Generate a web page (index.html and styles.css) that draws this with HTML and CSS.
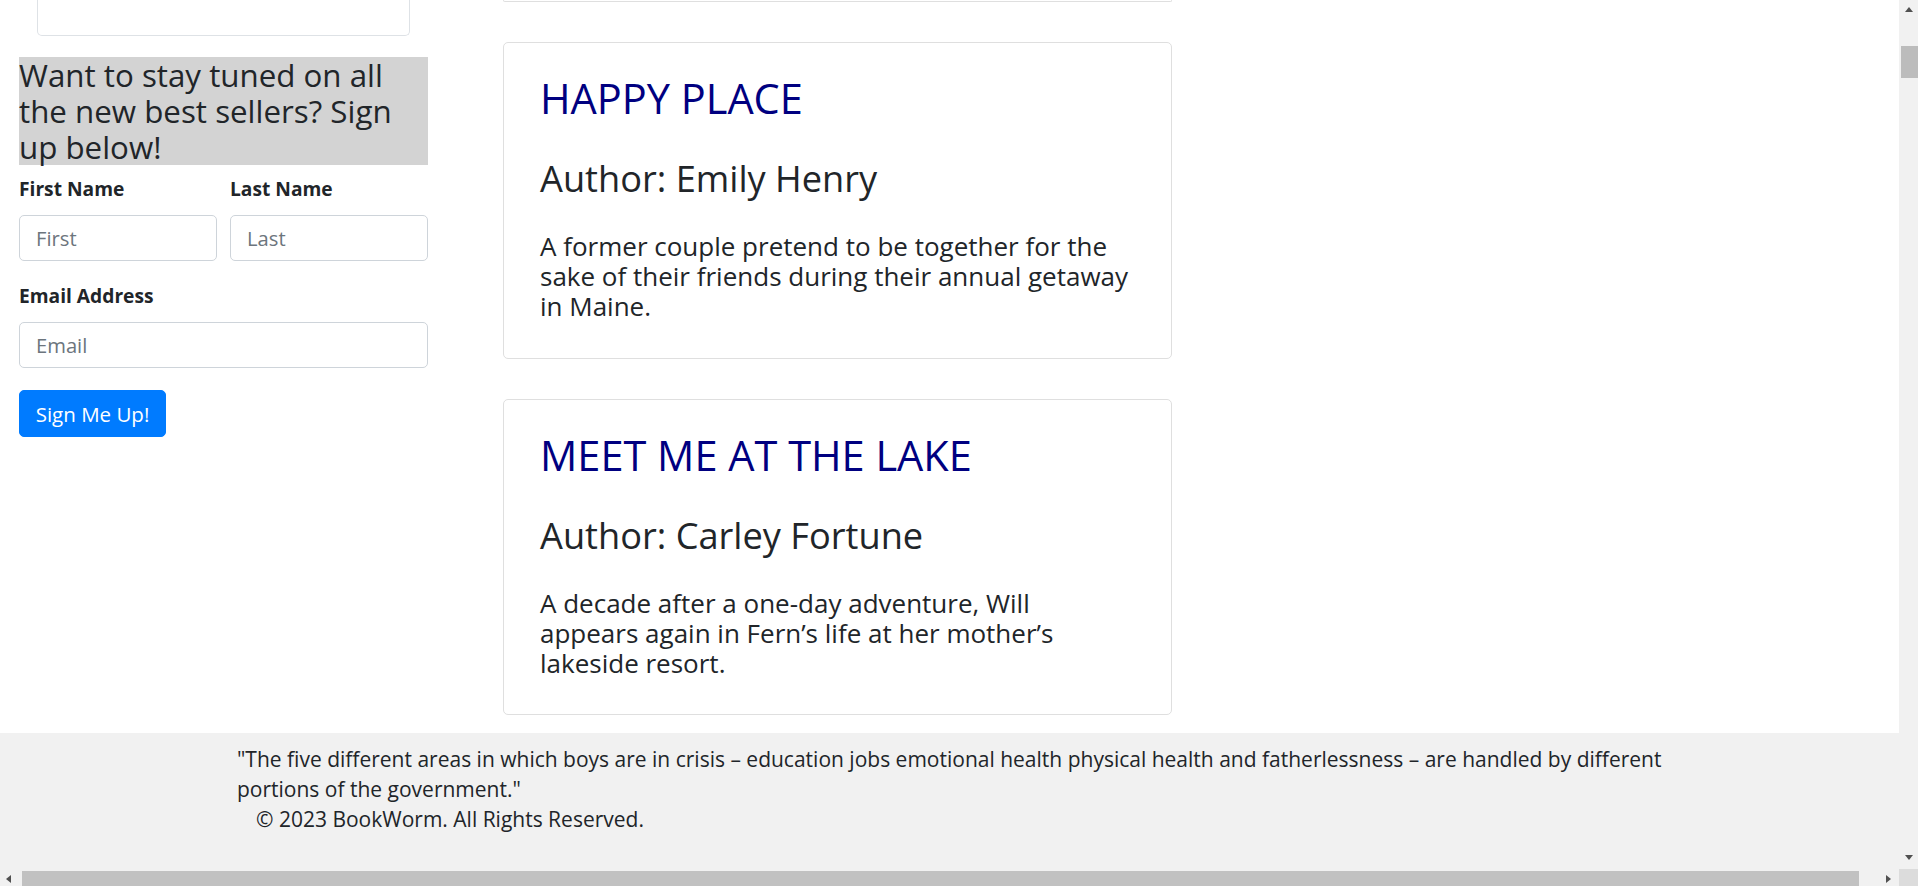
FILE: index.html
```html
<!DOCTYPE html>
<html lang="en">
<head>
<meta charset="utf-8">
<title>BookWorm</title>
<link rel="stylesheet" href="styles.css">
</head>
<body>
<div class="screen">
  <div class="page">
    <div class="main">
      <aside class="side">
        <div class="side-cut"></div>
        <h3 class="promo">Want to stay tuned on all the new best sellers? Sign up below!</h3>
        <form class="signup">
          <div class="name-row">
            <div class="field">
              <label for="first">First Name</label>
              <input id="first" type="text" placeholder="First">
            </div>
            <div class="field">
              <label for="last">Last Name</label>
              <input id="last" type="text" placeholder="Last">
            </div>
          </div>
          <div class="field email-field">
            <label for="email">Email Address</label>
            <input id="email" type="email" placeholder="Email">
          </div>
          <button type="button" class="btn">Sign Me Up!</button>
        </form>
      </aside>
      <section class="books">
        <div class="book-cut"></div>
        <article class="book">
          <h2 class="book-title">HAPPY PLACE</h2>
          <h3 class="book-author">Author: Emily Henry</h3>
          <p class="book-desc">A former couple pretend to be together for the sake of their friends during their annual getaway in Maine.</p>
        </article>
        <article class="book">
          <h2 class="book-title">MEET ME AT THE LAKE</h2>
          <h3 class="book-author">Author: Carley Fortune</h3>
          <p class="book-desc">A decade after a one-day adventure, Will appears again in Fern’s life at her mother’s lakeside resort.</p>
        </article>
      </section>
    </div>
    <footer class="footer">
      <p class="quote">"The five different areas in which boys are in crisis – education jobs emotional health physical health and fatherlessness – are handled by different portions of the government."</p>
      <p class="copy">© 2023 BookWorm. All Rights Reserved.</p>
    </footer>
  </div>
  <div class="vbar">
    <span class="arrow-up"></span>
    <span class="vthumb"></span>
    <span class="vspace"></span>
    <span class="arrow-down"></span>
  </div>
  <div class="hbar">
    <span class="arrow-left"></span>
    <span class="hthumb"></span>
    <span class="arrow-right"></span>
  </div>
  <div class="corner"></div>
</div>
</body>
</html>
```

FILE: styles.css
```css
* { box-sizing: border-box; }
html, body { margin: 0; padding: 0; overflow: hidden; background: #fff; }
body {
  font-family: "Open Sans", "DejaVu Sans", sans-serif;
  color: #212529;
}
.screen {
  display: grid;
  grid-template-columns: 1899px 19px;
  grid-template-rows: 869px 17px;
  width: 1918px;
  height: 886px;
}
.page {
  overflow: hidden;
  display: flex;
  flex-direction: column;
  background: #fff;
}
.main {
  display: flex;
  align-items: flex-start;
  gap: 75px;
  padding-left: 19px;
}
.side { width: 409px; flex: none; }
.side-cut {
  margin: 0 18px;
  height: 36px;
  border: 1px solid #dee2e6;
  border-top: none;
  border-radius: 0 0 5px 5px;
}
.promo {
  margin: 21px 0 0;
  background: #d3d3d3;
  font-size: 31.3px;
  line-height: 36px;
  font-weight: 400;
}
.signup { margin: 0; }
.name-row { display: flex; gap: 13px; margin-top: 9px; }
.name-row .field { flex: 1; }
.email-field { margin-top: 20px; }
.field label {
  display: block;
  font-weight: 700;
  font-size: 19.2px;
  line-height: 29px;
  margin: 0 0 12px;
}
.field input {
  display: block;
  width: 100%;
  height: 46px;
  border: 1px solid #ced4da;
  border-radius: 5px;
  padding: 0 16px;
  font-family: "Open Sans", sans-serif;
  font-size: 20.2px;
  color: #495057;
  background: #fff;
}
.field input::placeholder { color: #6c757d; }
.btn {
  display: block;
  margin-top: 22px;
  width: 147px;
  height: 47px;
  padding: 0;
  background: #007bff;
  color: #fff;
  border: 1px solid #007bff;
  border-radius: 5px;
  font-family: "Open Sans", sans-serif;
  font-size: 20.5px;
}
.books { width: 669px; flex: none; }
.book-cut {
  height: 2px;
  border: 1px solid #dfdfdf;
  border-top: none;
  border-radius: 0 0 5px 5px;
  margin-bottom: 40px;
}
.book {
  border: 1px solid #dfdfdf;
  border-radius: 5px;
  padding: 31px 36px 36.5px;
  margin-bottom: 40px;
}
.book:last-child { margin-bottom: 0; }
.book-title {
  margin: 0;
  font-size: 41.5px;
  line-height: 49px;
  font-weight: 400;
  color: #000080;
}
.book-author {
  margin: 34px 0 0;
  font-size: 36.2px;
  line-height: 43px;
  font-weight: 400;
}
.book-desc {
  margin: 31px 0 0;
  max-width: 591px;
  font-size: 26px;
  line-height: 30px;
}
.footer {
  flex: 1;
  margin-top: 18px;
  background: #f1f1f1;
  padding: 10.5px 0 0 237px;
  font-size: 21px;
  line-height: 30px;
}
.quote { margin: 0; width: 1445px; }
.copy { margin: 0; padding-left: 19px; }

/* scrollbars */
.vbar {
  background: #f1f1f1;
  display: flex;
  flex-direction: column;
  align-items: center;
}
.arrow-up {
  margin-top: 7px;
  width: 0; height: 0;
  border-left: 4.5px solid transparent;
  border-right: 4.5px solid transparent;
  border-bottom: 5px solid #505050;
  margin-left: 1px;
}
.vthumb {
  margin-top: 34px;
  width: 17px;
  height: 32px;
  align-self: flex-end;
  background: #bcbcbc;
}
.vspace { flex: 1; }
.arrow-down {
  margin-bottom: 9px;
  width: 0; height: 0;
  border-left: 4.5px solid transparent;
  border-right: 4.5px solid transparent;
  border-top: 5px solid #505050;
  margin-left: 1px;
}
.hbar {
  background: #f1f1f1;
  display: flex;
  align-items: center;
}
.arrow-left {
  margin-left: 6px;
  width: 0; height: 0;
  border-top: 4.5px solid transparent;
  border-bottom: 4.5px solid transparent;
  border-right: 5px solid #505050;
  margin-top: 2px;
}
.hthumb {
  margin-left: 11px;
  width: 1837px;
  height: 15px;
  align-self: flex-end;
  background: #c1c1c1;
}
.arrow-right {
  margin-left: 27px;
  width: 0; height: 0;
  border-top: 4.5px solid transparent;
  border-bottom: 4.5px solid transparent;
  border-left: 5px solid #505050;
  margin-top: 2px;
}
.corner { background: #dcdcdc; }
```
